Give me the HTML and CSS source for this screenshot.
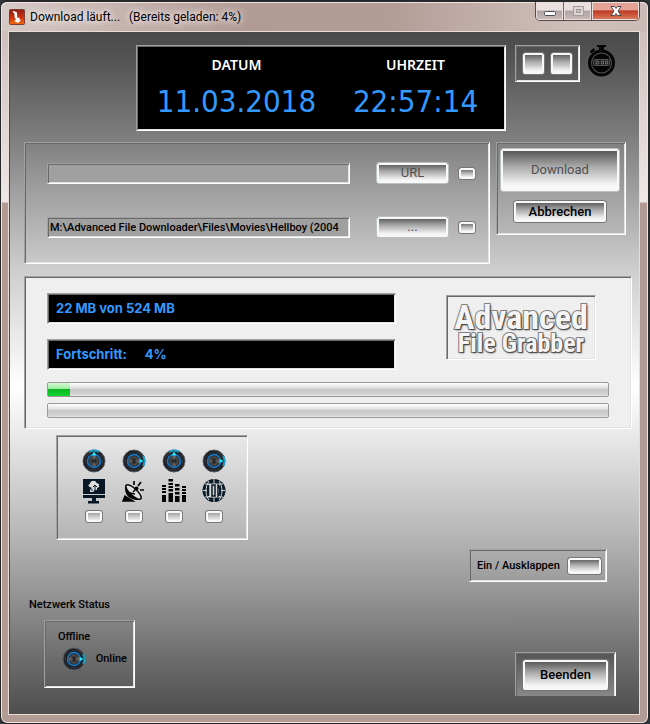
FILE: index.html
```html
<!DOCTYPE html>
<html lang="de">
<head>
<meta charset="utf-8">
<meta name="viewport" content="width=device-width, initial-scale=1">
<title>Advanced File Grabber</title>
<link rel="stylesheet" href="styles.css">
</head>
<body>
<svg class="defs" aria-hidden="true">
  <defs>
    <linearGradient id="rim" x1="0" y1="0" x2="1" y2="1">
      <stop offset="0" stop-color="#555"/><stop offset=".3" stop-color="#15181c"/><stop offset=".7" stop-color="#25282c"/><stop offset="1" stop-color="#0c0e10"/>
    </linearGradient>
    <radialGradient id="hub"><stop offset="0" stop-color="#111"/><stop offset=".6" stop-color="#4a4a4a"/><stop offset="1" stop-color="#181818"/></radialGradient>
    <symbol id="knob" viewBox="0 0 24 24">
      <circle cx="12" cy="12" r="11" fill="url(#rim)" stroke="#555b60"/>
      <path d="M7 2.800A10.500 10.500 0 0 1 17 2.800" fill="none" stroke="#1f9fc4" stroke-width="2"/>
      <circle cx="12" cy="12" r="8.500" fill="#181b1f" stroke="#30353a"/>
      <circle cx="12" cy="12" r="6.500" fill="url(#hub)" stroke="#147dd2" stroke-width="1.400"/>
      <path d="M12 12L9.500 6.500H14.500ZM12 12L9.500 17.500H14.500Z" fill="#777" opacity=".5"/>
      <path d="M12 2.500L14.300 6.500H9.700Z" fill="#25e4ff"/>
    </symbol>
  </defs>
</svg>
<div class="window">
  <header class="titlebar">
    <svg class="app-icon" viewBox="0 0 16 16" aria-hidden="true">
      <defs><linearGradient id="app" x2="0" y2="1"><stop stop-color="#8f2217"/><stop offset=".5" stop-color="#c92c0c"/><stop offset="1" stop-color="#f36a10"/></linearGradient></defs>
      <rect x=".5" y=".5" width="15" height="15" rx="1" fill="url(#app)" stroke="#7d3a30"/>
      <path d="M3.500 2.500L5 2L8 3.500L8.300 9L10.500 8.500L10.500 10.500L12 11L9 14L5 12L7 11L5.500 8L5.500 5Z" fill="#fff"/>
    </svg>
    <h1 class="title">Download läuft...&nbsp;&nbsp; (Bereits geladen: 4%)</h1>
    <div class="window-controls">
      <button class="wc wc-min" aria-label="Minimieren"><svg viewBox="0 0 14 12"><rect x="1.500" y="6.500" width="11" height="4" rx="1" fill="#fff" stroke="#4a505c"/></svg></button>
      <button class="wc wc-max" aria-label="Maximieren" disabled><svg viewBox="0 0 14 12"><rect x="2.500" y="1.500" width="10" height="9" fill="#ded6d4" stroke="#a49b9a"/><rect x="5.500" y="4.500" width="4" height="3" fill="#cbbfbd" stroke="#a49b9a"/></svg></button>
      <button class="wc wc-close" aria-label="Schließen"><svg viewBox="0 0 14 12"><path d="M2 1.500H5.500L7 3.500L8.500 1.500H12L9 6L12 10.500H8.500L7 8.500L5.500 10.500H2L5 6Z" fill="#fff" stroke="#4b4450"/></svg></button>
    </div>
  </header>

  <main class="client">
    <section class="top-row">
      <div class="clock panel">
        <div class="clock-cell"><span class="clock-label">DATUM</span><time class="clock-value">11.03.2018</time></div>
        <div class="clock-cell"><span class="clock-label">UHRZEIT</span><time class="clock-value">22:57:14</time></div>
      </div>
      <div class="square-box panel">
        <button class="btn square" aria-label="Option 1"></button>
        <button class="btn square" aria-label="Option 2"></button>
      </div>
      <svg class="stopwatch" viewBox="0 0 28 32" aria-hidden="true">
        <path d="M9 0H18V2H16V6H11V2H9Z" fill="#050505"/>
        <path d="M2.500 7.500L6.500 4" stroke="#050505" stroke-width="2.500"/>
        <circle cx="13.500" cy="18" r="12" fill="#555" stroke="#050505" stroke-width="3"/>
        <circle cx="13.500" cy="18" r="9.500" fill="#050505"/>
        <rect x="5.500" y="14.500" width="16" height="6" rx="1" fill="#222" stroke="#555"/>
        <path d="M8 16H10V19H8ZM13.500 16H15.500V19H13.500ZM17.500 16H19.500V19H17.500ZM11.500 16.500V17M11.500 18.500V19" fill="none" stroke="#777" stroke-width=".8"/>
      </svg>
    </section>

    <section class="source-row">
      <div class="source panel">
        <input class="field panel" type="text" aria-label="URL-Adresse">
        <button class="btn disabled side" disabled>URL</button>
        <button class="btn mini" aria-label="URL einfügen"></button>
        <input class="field panel" type="text" aria-label="Speicherort" value="M:\Advanced File Downloader\Files\Movies\Hellboy (2004">
        <button class="btn disabled side" disabled>...</button>
        <button class="btn mini" aria-label="Ordner öffnen"></button>
      </div>
      <div class="actions panel">
        <button class="btn disabled download" disabled>Download</button>
        <button class="btn cancel">Abbrechen</button>
      </div>
    </section>

    <section class="status panel">
      <div class="status-top">
        <div class="readouts">
          <p class="readout panel">22 MB von 524 MB</p>
          <p class="readout panel"><span>Fortschritt:</span><span>4%</span></p>
        </div>
        <div class="logo panel"><span class="logo-big">Advanced</span><span class="logo-small">File Grabber</span></div>
      </div>
      <progress class="bar" aria-label="Fortschritt" value="4" max="100"></progress>
      <progress class="bar" aria-label="Gesamt" value="0" max="100"></progress>
    </section>

    <section class="tools panel">
      <div class="tool">
        <svg class="knob" aria-hidden="true"><use href="#knob"/></svg>
        <svg class="tool-icon" viewBox="0 0 24 26" aria-hidden="true">
          <path d="M1 1H23V16H1ZM1 17H23V20H14V23H17V25.500H6V23H10V20H1Z" fill="#081725"/>
          <path d="M8 9C6 9 6 6 8 6C8 2 14 2 14.500 5C18 5 18 10 15 10V12H13L11 14H8V12L10 10Z" fill="#ddd"/>
          <path d="M13 13V7M11 9L13 7L15 9M9 12H11" fill="none" stroke="#081725"/>
        </svg>
        <button class="btn mini" aria-label="Cloud"></button>
      </div>
      <div class="tool">
        <svg class="knob right" aria-hidden="true"><use href="#knob"/></svg>
        <svg class="tool-icon" viewBox="0 0 24 26" aria-hidden="true">
          <path d="M4 7C1 13 5 21 14 22C16 22 18 22 19 21Z" fill="#050505"/>
          <ellipse cx="11.500" cy="14" rx="10" ry="3.500" transform="rotate(43 11.500 14)" fill="#ddd" stroke="#050505" stroke-width="1.500"/>
          <path d="M11 14L15 10M8 15L13 16M3 18L1 23H11Z" stroke="#050505" stroke-width="1.500" fill="#050505"/>
          <circle cx="14.500" cy="10.500" r="2" fill="#050505"/>
          <path d="M12 3V7M19 4L16 8M18 12H22" stroke="#050505" stroke-width="1.700"/>
        </svg>
        <button class="btn mini" aria-label="Empfang"></button>
      </div>
      <div class="tool">
        <svg class="knob" aria-hidden="true"><use href="#knob"/></svg>
        <svg class="tool-icon" viewBox="0 0 24 26" aria-hidden="true">
          <path d="M0 16H4V23H0ZM0 12H4V14H0ZM0 9H4V11H0ZM0 6H4V8H0ZM6.500 14H11V23H6.500ZM6.500 10H11V12.500H6.500ZM6.500 7H11V9H6.500ZM6.500 4H11V6H6.500ZM6.500 0H11V2.500H6.500ZM13 17H17.500V23H13ZM13 13H17.500V15.500H13ZM13 9H17.500V11.500H13ZM13 5H17.500V7.500H13ZM20 16H24V23H20ZM20 13H24V15H20ZM20 10H24V12H20ZM20 7H24V9H20Z" fill="#050505" transform="translate(0 1)"/>
        </svg>
        <button class="btn mini" aria-label="Statistik"></button>
      </div>
      <div class="tool">
        <svg class="knob right" aria-hidden="true"><use href="#knob"/></svg>
        <svg class="tool-icon" viewBox="0 0 24 26" aria-hidden="true">
          <circle cx="12" cy="12.500" r="11.500" fill="#091a28"/>
          <path d="M12 1V24M7 3C3 9 3 17 7 22M17 3C21 9 21 17 17 22M3 6H21M3 19H21M1 12.500H5M19 12.500H23" fill="none" stroke="#d5d5d5"/>
          <rect x="6" y="6" width="12" height="13" fill="#d5d5d5"/>
          <path d="M6.500 7V18M10 7V18H13V7ZM16 7C18.500 8 18.500 17 16 18Z" fill="#d5d5d5" stroke="#091a28" stroke-width="1.500"/>
        </svg>
        <button class="btn mini" aria-label="Web"></button>
      </div>
    </section>

    <section class="toggle panel">
      <label for="expand">Ein / Ausklappen</label>
      <button id="expand" class="btn expand"></button>
    </section>

    <footer class="bottom-row">
      <div class="network">
        <h2 class="network-title">Netzwerk Status</h2>
        <div class="network-box panel">
          <span>Offline</span>
          <div class="online"><svg class="knob right" aria-hidden="true"><use href="#knob"/></svg><span>Online</span></div>
        </div>
      </div>
      <div class="quit-box panel"><button class="btn quit">Beenden</button></div>
    </footer>
  </main>
</div>
</body>
</html>
```
FILE: styles.css
```css
* { box-sizing: border-box; }
body {
  margin: 0;
  background: #30383b;
  color: #000;
  font: 500 11px/16px Roboto, "Liberation Sans", sans-serif;
}
h1, h2, p { margin: 0; font: inherit; }
button, input { font: inherit; color: inherit; }
.defs { position: absolute; width: 0; height: 0; }

.window {
  display: flex;
  flex-direction: column;
  min-height: 100vh;
  padding: 0 8px 8px 7px;
  border: 1px solid #26282a;
  border-width: 2px 2px 1px 1px;
  border-radius: 7px;
  box-shadow: inset 0 0 0 1px #eee5e3;
  background:
    linear-gradient(90deg, #d6cac7, #b39b95 38%, #b49c96 60%, #d0c1bd 90%, #cbbab6) 0 0 / 100% 29px no-repeat,
    linear-gradient(#c9b8b5 0, #eee8e6 200px, #b39b95 201px);
}
.titlebar {
  display: flex;
  align-items: flex-start;
  height: 29px;
}
.app-icon { width: 16px; height: 16px; margin: 7px 5px 0 1px; }
.title {
  flex: 1;
  font: 12px/16px Roboto, "Open Sans", sans-serif;
  padding-top: 7px;
  text-shadow: 0 0 6px #fff, 0 0 10px #f4ebe9;
}
.window-controls {
  display: flex;
  height: 19px;
  border: 1px solid #55494a;
  border-top: 0;
  border-radius: 0 0 5px 5px;
  overflow: hidden;
}
.wc {
  width: 28px;
  padding: 0;
  border: 0;
  border-right: 1px solid #776d6d;
  background: linear-gradient(#e9e1df 0 45%, #b2a3a3 50%, #c9bcbb);
  box-shadow: inset 0 0 0 1px #eadfdd;
}
.wc svg { display: block; width: 14px; height: 12px; margin: auto; }
.wc-close {
  width: 47px;
  border-right: 0;
  background: linear-gradient(#e5a397 0 42%, #bf3a22 50%, #dc7f61);
}

.client {
  flex: 1;
  display: flex;
  flex-direction: column;
  padding: 13px 7px 18px 15px;
  border: 1px solid #eadcd9;
  box-shadow: inset 1px 1px #504746;
  background: linear-gradient(#4a4a4a 0, #545454 4%, #808080 16%, #a2a2a2 24%, #cecece 35%, #fff 52%, #ededed 58%, #b5b5b5 74%, #929292 83%, #707070 91%, #4e4e4e);
}
.panel {
  border: 1px solid;
  border-color: #a0a0a0 #fff #fff #a0a0a0;
  box-shadow: inset 1px 1px #696969, inset -1px -1px #e3e3e3;
}
.btn {
  display: block;
  padding: 0;
  border: 1px solid #777;
  border-radius: 3px;
  box-shadow: inset 0 0 0 2px #f8f8f8;
  background: linear-gradient(#4c4c4c, #aaa 42%, #f1f1f1 82%, #fff);
}
.btn.disabled { color: #505050; border-color: #b9c1c4; font-weight: 400; }
.mini { width: 18px; height: 13px; }

.top-row {
  display: flex;
  justify-content: flex-end;
  align-items: flex-start;
  padding-right: 16px;
}
.clock {
  display: flex;
  flex: 0 1 370px;
  height: 86px;
  margin-right: 9px;
  padding: 9px 0 9px 10px;
  background: #000;
}
.clock-cell { flex: 1; text-align: center; white-space: nowrap; }
.clock-label {
  display: block;
  color: #fff;
  font: 600 14px/20px "Noto Sans", sans-serif;
}
.clock-value {
  display: block;
  margin-top: 6px;
  color: #3399ff;
  font: 31px/40px "DejaVu Sans Condensed", "DejaVu Sans", sans-serif;
}
.square-box {
  display: flex;
  gap: 5px;
  height: 37px;
  margin-right: 8px;
  padding: 6px;
}
.square { width: 23px; height: 23px; }
.stopwatch { width: 28px; height: 32px; }

.source-row {
  display: flex;
  align-items: flex-start;
  gap: 6px;
  margin-top: 11px;
  padding-right: 6px;
}
.source {
  flex: 1;
  display: grid;
  grid-template-columns: 1fr 73px 18px;
  column-gap: 9px;
  row-gap: 32px;
  align-items: center;
  padding: 19px 13px 25px 22px;
}
.field {
  width: calc(100% - 17px);
  height: 21px;
  padding: 0 2px;
  border-radius: 0;
  background: #a0a0a0;
}
.side { height: 22px; }
.actions {
  display: flex;
  flex-direction: column;
  align-items: center;
  gap: 8px;
  width: 130px;
  padding: 5px 5px 11px 3px;
}
.download { width: 120px; height: 44px; }
.cancel { width: 94px; height: 23px; }
.side, .download, .cancel, .quit { font-size: 13px; }

.status {
  margin-top: 12px;
  padding: 16px 22px 10px 22px;
  background: #efefef;
}
.status-top {
  display: flex;
  justify-content: space-between;
  align-items: flex-start;
  margin-bottom: 12px;
}
.readouts { display: grid; gap: 15px; flex: 0 1 349px; }
.readout {
  display: flex;
  gap: 18px;
  height: 31px;
  padding: 6px 8px;
  background: #000;
  color: #3399ff;
  font: bold 13px/16px Inter, "Liberation Sans", sans-serif;
}
.logo {
  display: flex;
  flex-direction: column;
  align-items: center;
  width: 150px;
  height: 65px;
  margin: 2px 13px 0 0;
  padding-top: 7px;
  color: #f4f4f4;
  font-family: "Liberation Sans Narrow", "Roboto Condensed", Roboto, sans-serif;
  font-weight: bold;
  white-space: nowrap;
  -webkit-text-stroke: 2px #858585;
  paint-order: stroke fill;
  text-shadow: 1px 1px 2px #333;
}
.logo-big { font-size: 34px; line-height: 28px; }
.logo-small { font-size: 26px; line-height: 24px; }
.bar {
  display: block;
  width: 100%;
  height: 15px;
  border: 1px solid #9a9a9a;
  border-radius: 2px;
  appearance: none;
  background: linear-gradient(#fff, #e0e0e0 40%, #c8c8c8 50%, #cecece 80%, #e6e6e6);
}
.bar + .bar { margin-top: 6px; }
.bar::-webkit-progress-bar { background: transparent; }
.bar::-webkit-progress-value {
  background: linear-gradient(#d5f8d5, #a0eda2 42%, #0bb524 50%, #12d42f);
}

.tools {
  display: flex;
  gap: 16px;
  width: 192px;
  height: 105px;
  margin: 6px 0 0 32px;
  padding: 13px 18px 0 25px;
}
.tool { display: flex; flex-direction: column; align-items: center; width: 24px; }
.tools .btn { background: linear-gradient(#888, #ccc 50%, #fff); }
.knob { width: 24px; height: 24px; }
.right { transform: rotate(90deg); }
.tool-icon { width: 24px; height: 26px; margin: 5px 0 6px; }

.toggle {
  display: flex;
  align-items: center;
  justify-content: space-between;
  align-self: flex-end;
  width: 138px;
  height: 33px;
  margin: 9px 25px 0 0;
  padding: 0 4px 0 7px;
  white-space: nowrap;
}
.expand { width: 35px; height: 18px; }

.bottom-row {
  display: flex;
  justify-content: space-between;
  align-items: flex-end;
  margin-top: auto;
  padding: 0 16px 0 4px;
}
.network { padding-bottom: 8px; }
.network-title { margin: 0 0 7px 1px; }
.network-box {
  width: 91px;
  height: 68px;
  margin-left: 16px;
  padding: 8px 7px 0 13px;
}
.online {
  display: flex;
  align-items: center;
  justify-content: space-between;
  margin: 2px 0 0 4px;
}
.quit-box {
  padding: 6px 6px 5px;
  border-bottom: 0;
  background: linear-gradient(#555, #888);
  box-shadow: inset 1px 1px #696969, inset -1px 0 #e3e3e3;
}
.quit { width: 87px; height: 32px; }
```
